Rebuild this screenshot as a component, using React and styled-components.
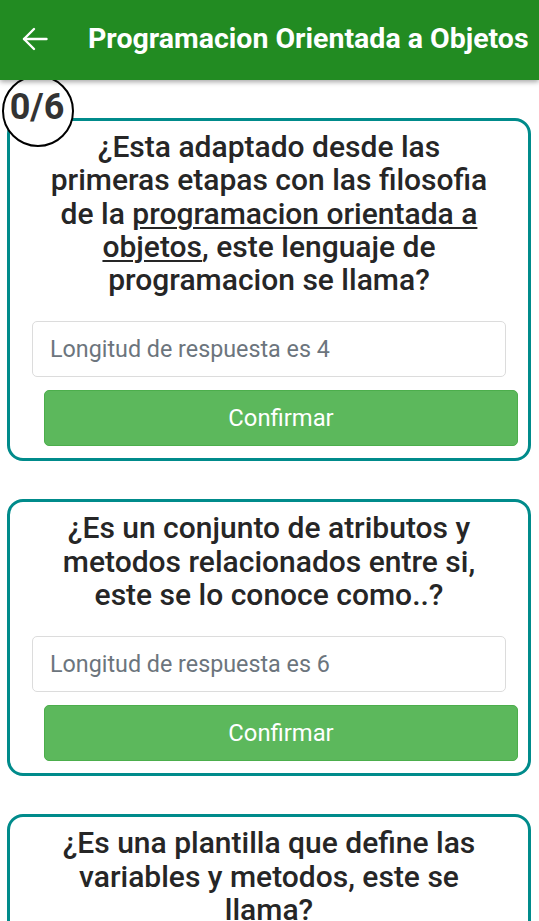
import React from 'react';
import styled, { createGlobalStyle } from 'styled-components';

const Global = createGlobalStyle`
  html, body { margin: 0; padding: 0; background: #fff; }
  body { font-family: Roboto, "Noto Sans", "Liberation Sans", sans-serif; }
  * { box-sizing: border-box; }
`;

const Page = styled.div`
  position: relative;
  width: 539px;
  height: 921px;
  overflow: hidden;
  background: #fff;
`;

const Header = styled.header`
  position: relative;
  z-index: 2;
  height: 80px;
  background: #228b22;
  box-shadow: 0 2px 5px rgba(0, 0, 0, 0.35);
  display: flex;
  align-items: center;
  padding-left: 22px;
  gap: 40px;
  color: #fff;
`;

const BackButton = styled.button`
  border: 0;
  background: none;
  padding: 0;
  display: flex;
  color: #fff;
  margin-top: -2px;
`;

const Title = styled.h1`
  margin: 0;
  font-size: 28.5px;
  font-weight: 700;
  letter-spacing: 0;
  white-space: nowrap;
  margin-top: -3px;
`;

const Badge = styled.div`
  position: absolute;
  z-index: 1;
  left: 2px;
  top: 75px;
  width: 72px;
  height: 72px;
  border: 2.5px solid #000;
  border-radius: 50%;
  background: #fff;
  display: flex;
  align-items: center;
  justify-content: center;
  padding-bottom: 8px;
  padding-right: 2px;
  font-size: 36px;
  font-weight: 700;
  color: #333;
`;

const List = styled.main`
  display: flex;
  flex-direction: column;
  gap: 38px;
  padding: 38px 8px 0 7px;
`;

const Card = styled.section`
  border: 3px solid #008b8b;
  border-radius: 16px;
  padding: 9px 0 12px;
  display: flex;
  flex-direction: column;
`;

const Question = styled.h2`
  margin: 0 0 25px;
  padding: 0 35px;
  font-size: 30px;
  line-height: 33.3px;
  font-weight: 500;
  text-align: center;
  color: #262626;

  u {
    text-decoration-thickness: 2px;
    text-underline-offset: 3px;
  }
`;

const AnswerInput = styled.input`
  margin: 0 22px;
  height: 56px;
  border: 1px solid #dcdcdc;
  border-radius: 5px;
  padding: 0 17px;
  font-family: Roboto, "Noto Sans", sans-serif;
  font-size: 23.3px;
  color: #333;
  background: #fff;
  outline: none;

  &::placeholder {
    color: #6c757d;
  }
`;

const ConfirmButton = styled.button`
  margin: 13px 10px 0 34px;
  height: 56px;
  border: 1px solid #4cae4c;
  border-radius: 5px;
  background: #5cb85c;
  color: #fff;
  font-family: Roboto, "Noto Sans", sans-serif;
  font-size: 23.8px;
  font-weight: 400;
`;

const ArrowIcon = () => (
  <svg width="26" height="24" viewBox="0 0 26 24" fill="none" stroke="currentColor" strokeWidth="2.4" strokeLinecap="round" strokeLinejoin="round">
    <path d="M24.5 12H2" />
    <path d="M12 2L2 12l10 10" />
  </svg>
);

const questions = [
  {
    text: (
      <>
        ¿Esta adaptado desde las primeras etapas con las filosofia de la{' '}
        <u>programacion orientada a objetos</u>, este lenguaje de programacion se llama?
      </>
    ),
    len: 4,
  },
  {
    text: '¿Es un conjunto de atributos y metodos relacionados entre si, este se lo conoce como..?',
    len: 6,
  },
  {
    text: '¿Es una plantilla que define las variables y metodos, este se llama?',
    len: 5,
  },
];

export default function App() {
  return (
    <Page>
      <Global />
      <Header>
        <BackButton aria-label="Volver">
          <ArrowIcon />
        </BackButton>
        <Title>Programacion Orientada a Objetos</Title>
      </Header>
      <Badge>0/6</Badge>
      <List>
        {questions.map((q, i) => (
          <Card key={i}>
            <Question>{q.text}</Question>
            <AnswerInput placeholder={`Longitud de respuesta es ${q.len}`} />
            <ConfirmButton>Confirmar</ConfirmButton>
          </Card>
        ))}
      </List>
    </Page>
  );
}
